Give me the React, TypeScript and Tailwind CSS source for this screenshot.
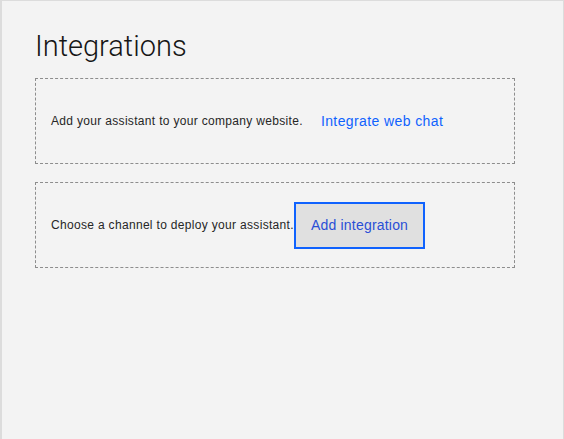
import React from 'react';

const IntegrationRow: React.FC<{ text: string; children: React.ReactNode }> = ({ text, children }) => (
    <div className="flex items-center h-[86px] px-[15px] border border-dashed border-[#8d8d8d]">
        <p className="text-[12px] tracking-[0.32px] text-[#262626]">{text}</p>
        {children}
    </div>
);

export default function App() {
    return (
        <div
            className="w-[564px] h-[439px] bg-[#f3f3f3] border-l-2 border-t border-r border-[#dcdcdc] box-border"
            style={{ fontFamily: '"Liberation Sans", Arial, sans-serif' }}
        >
            <div className="pl-[33px] pr-[48px] pt-[27px]">
                <h1
                    className="text-[29px] font-light leading-[36px] text-[#161616] mb-[14px]"
                    style={{ fontFamily: 'Roboto, "Liberation Sans", sans-serif' }}
                >
                    Integrations
                </h1>
                <div className="flex flex-col gap-[18px]">
                    <IntegrationRow text="Add your assistant to your company website.">
                        <a href="#" className="ml-[18px] text-[14px] tracking-[0.4px] text-[#0f62fe]">
                            Integrate web chat
                        </a>
                    </IntegrationRow>
                    <IntegrationRow text="Choose a channel to deploy your assistant.">
                        <button className="h-[47px] px-[15px] bg-[#e0e0e0] border-2 border-[#0f62fe] text-[14px] tracking-[0.2px] text-[#2a4fd6]">
                            Add integration
                        </button>
                    </IntegrationRow>
                </div>
            </div>
        </div>
    );
}
